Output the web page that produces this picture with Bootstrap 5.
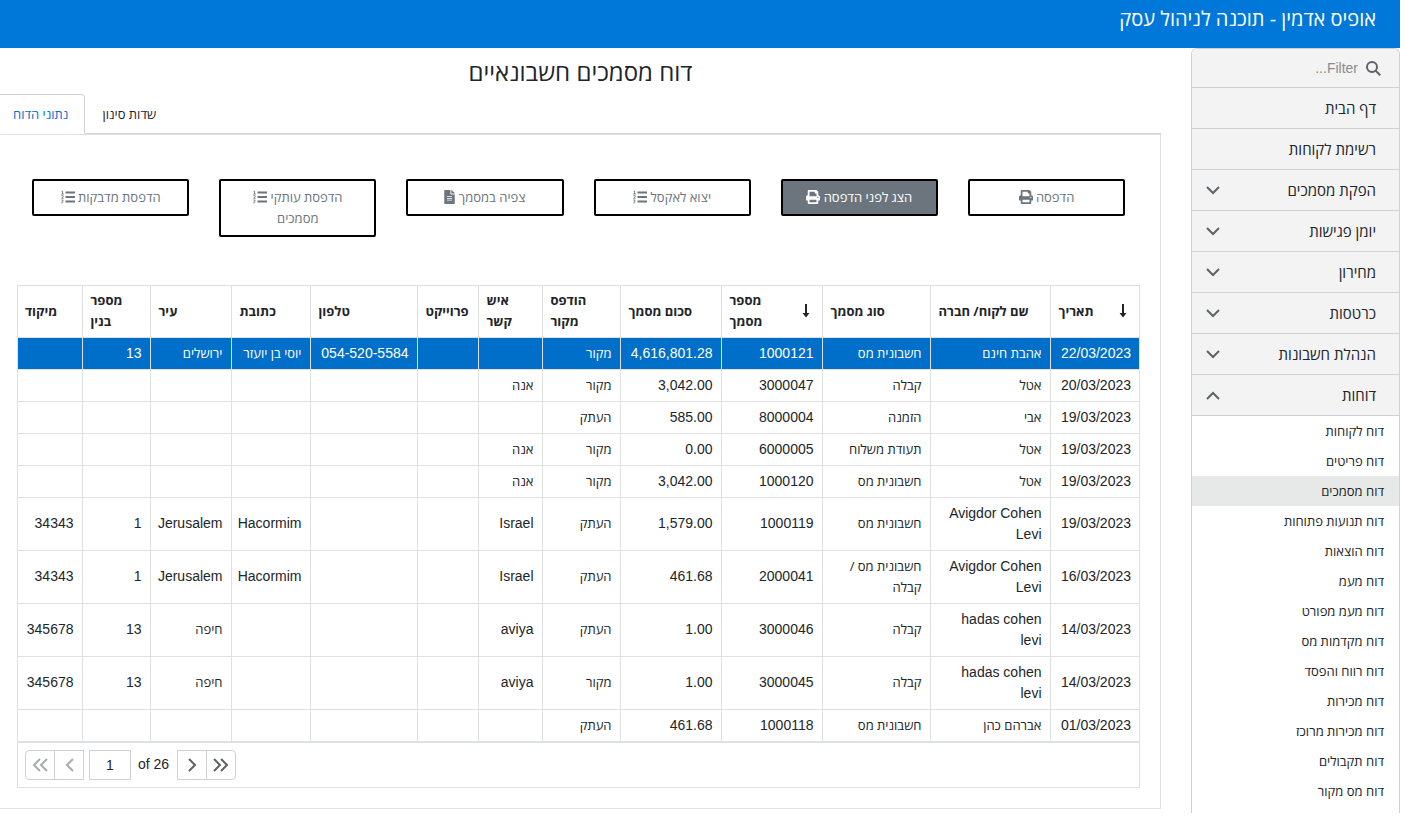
<!DOCTYPE html>
<html lang="he" dir="rtl">
<head>
<meta charset="utf-8">
<meta name="viewport" content="width=device-width, initial-scale=1">
<title>אופיס אדמין - תוכנה לניהול עסק</title>
<link rel="stylesheet" href="https://cdn.jsdelivr.net/npm/bootstrap@5.3.0/dist/css/bootstrap.min.css">
<style>
  :root { --he: "Open Sans", "Liberation Sans", sans-serif; --la: "Liberation Sans", "Open Sans", sans-serif; --line: #dfe0e2; --edge: #ced1da; }
  body { font-family: var(--he); font-size: 14px; color: #212529; padding-right: 6px; background: #fff; }
  .topbar { background: #0078d9; height: 48px; padding: 4px 24px 12px; }
  .topbar a { color: #fff; font-size: 20px; line-height: 30px; text-decoration: none; font-weight: 500; }
  .side { width: 209px; border: 1px solid var(--edge); border-bottom: 0; border-radius: 6px 6px 0 0; padding-bottom: 7px; overflow: hidden; }
  .filterbox { height: 39px; background: #f3f3f3; border-bottom: 1px solid var(--edge); padding: 0 18px; }
  .filterbox input { background: transparent; border: 0; outline: 0; width: 100%; padding: 0; font-family: var(--la); font-size: 14px; }
  .filterbox input::placeholder { color: #8a8c8e; opacity: 1; }
  .menu-head { width: 100%; height: 41px; background: #f3f3f3; border: 0; border-bottom: 1px solid var(--edge); padding: 0 23px 0 14px; font-size: 15px; color: #212529; text-decoration: none; }
  .menu-sub a { height: 30px; line-height: 30px; padding: 0 15px; font-size: 13px; color: #212529; text-decoration: none; }
  .menu-sub a.current { background: #e7e9e8; }
  .main-area { margin-left: 0; margin-right: 30px; min-width: 0; }
  .page-title { font-size: 24px; line-height: 30px; margin: 9px 0 7px; }
  .report-tabs { --bs-nav-tabs-border-color: #d4d4d6; border-bottom-color: #d4d4d6; }
  .report-tabs .nav-link { font-size: 13px; line-height: 20px; color: #212529; padding: 9px 16px; border-radius: 0 4px 0 0; }
  .report-tabs .nav-link.active { color: #0b6fd0; border-left: 0; border-color: var(--edge) var(--edge) #fff; padding-left: 13px; }
  .pane { border: 1px solid var(--line); border-left: 0; padding: 44px 20px 20px 17px; }
  .tool-row { --bs-gutter-x: 30px; margin: 0; }
  .tool { border: 2px solid #000; border-radius: 2px; background: #fff; color: #6c757d; width: 100%; padding: 6px 16px; font-size: 13px; line-height: 21px; }
  .tool.on { background: #6c757d; color: #fff; }
  .tool svg { height: 14px; fill: currentColor; vertical-align: -2px; }
  .grid-box { border: 1px solid var(--line); margin-top: 48px; }
  .grid { width: 100%; table-layout: fixed; line-height: 21px; margin: 0; }
  .grid th, .grid td { padding: 5px 8px; border: 0 solid var(--line); border-bottom-width: 1px; vertical-align: middle; }
  .grid th + th, .grid td + td { border-right-width: 1px; }
  .grid th { font-size: 13px; font-weight: 700; text-align: left; height: 51px; padding: 4px 8px; }
  .grid td { font-family: var(--la); text-align: right; font-size: 14px; }
  .grid td.he { font-size: 13px; font-family: var(--he); }
  .grid tr.picked td { background: #006fc9; color: #fff; }
  .sorted { padding-right: 4px; }
  .w61 { width: 61px; } .w64 { width: 64px; } .w65 { width: 65px; } .w68 { width: 68px; } .w78 { width: 78px; } .w79 { width: 79px; } .w81 { width: 81px; }
  .w89 { width: 89px; } .w101 { width: 101px; } .w107 { width: 107px; } .w108 { width: 108px; } .w120 { width: 120px; }
  .pager { border-top: 1px solid var(--line); padding: 7px; font-family: var(--la); font-size: 14px; height: 45px; }
  .pager button, .pager input { height: 30px; border: 1px solid var(--edge); background: #fff; padding: 0; }
  .pager button { width: 30px; color: #5f6266; display: flex; align-items: center; justify-content: center; }
  .pager button:disabled { color: #a9abad; }
  .pager button + button { margin-left: -1px; }
  .pager input { width: 42px; text-align: center; margin: 0 7px 0 5px; color: #212529; }
  .stroke { fill: none; stroke: currentColor; stroke-width: 2; }
  .muted-ico { color: #5f6266; }
</style>
</head>
<body>
<svg width="0" height="0" class="position-absolute" aria-hidden="true">
  <symbol id="print" viewBox="0 0 512 512"><path d="M448 192V77.25c0-8.49-3.37-16.62-9.37-22.63L393.37 9.37c-6-6-14.14-9.37-22.63-9.37H96C78.33 0 64 14.33 64 32v160c-35.35 0-64 28.65-64 64v112c0 8.84 7.16 16 16 16h48v96c0 17.67 14.33 32 32 32h320c17.67 0 32-14.33 32-32v-96h48c8.84 0 16-7.16 16-16V256c0-35.35-28.65-64-64-64zm-64 256H128v-96h256v96zm0-224H128V64h192v48c0 8.84 7.16 16 16 16h48v96zm48 72c-13.25 0-24-10.75-24-24s10.75-24 24-24 24 10.75 24 24-10.75 24-24 24z"/></symbol>
  <symbol id="doc" viewBox="0 0 384 512"><path d="M224 136V0H24C10.7 0 0 10.7 0 24v464c0 13.3 10.7 24 24 24h336c13.3 0 24-10.7 24-24V160H248c-13.2 0-24-10.8-24-24zm64 236c0 6.6-5.4 12-12 12H108c-6.6 0-12-5.4-12-12v-8c0-6.6 5.4-12 12-12h168c6.6 0 12 5.4 12 12v8zm0-64c0 6.6-5.4 12-12 12H108c-6.6 0-12-5.4-12-12v-8c0-6.6 5.4-12 12-12h168c6.6 0 12 5.4 12 12v8zm0-72v8c0 6.6-5.4 12-12 12H108c-6.6 0-12-5.4-12-12v-8c0-6.6 5.4-12 12-12h168c6.6 0 12 5.4 12 12zm96-114.1v6.1H256V0h6.1c6.4 0 12.5 2.5 17 7l97.9 98c4.5 4.5 7 10.6 7 16.9z"/></symbol>
  <symbol id="list" viewBox="0 0 14 14"><path d="M4.500 1.500H14v2H4.500zM4.500 6H14v2H4.500zM4.500 10.500H14v2H4.500z"/><path d="M.5 1h1v3M0 4h3M.3 5.700h1.900v1.200L.6 8.300h2.100M.3 10h1.900l-.9 1.300c1.600.2 1 1.900-1.100 1.500" fill="none" stroke="currentColor" stroke-width=".8"/></symbol>
  <symbol id="down" viewBox="0 0 14 9"><path class="stroke" d="M1 1l6 6 6-6"/></symbol>
  <symbol id="up" viewBox="0 0 14 9"><path class="stroke" d="M1 8l6-6 6 6"/></symbol>
  <symbol id="sort" viewBox="0 0 8 14"><path fill="#212529" d="M3 0h2v9h2.500L4 13.500.5 9H3z"/></symbol>
</svg>

<header class="topbar"><a href="#">אופיס אדמין - תוכנה לניהול עסק</a></header>

<div class="d-flex align-items-start">
  <nav class="side flex-shrink-0">
    <div class="filterbox d-flex align-items-center gap-2">
      <svg class="muted-ico flex-shrink-0" width="15" height="15" viewBox="0 0 15 15" aria-hidden="true"><circle class="stroke" cx="6" cy="6" r="5"/><path class="stroke" d="M9.600 9.600l4.600 4.600"/></svg>
      <input type="text" placeholder="Filter..." aria-label="Filter">
    </div>
    <a class="menu-head d-flex align-items-center" href="#">דף הבית</a>
    <a class="menu-head d-flex align-items-center" href="#">רשימת לקוחות</a>
    <button class="menu-head d-flex align-items-center justify-content-between" type="button">הפקת מסמכים<svg class="muted-ico" width="14" height="9"><use href="#down"/></svg></button>
    <button class="menu-head d-flex align-items-center justify-content-between" type="button">יומן פגישות<svg class="muted-ico" width="14" height="9"><use href="#down"/></svg></button>
    <button class="menu-head d-flex align-items-center justify-content-between" type="button">מחירון<svg class="muted-ico" width="14" height="9"><use href="#down"/></svg></button>
    <button class="menu-head d-flex align-items-center justify-content-between" type="button">כרטסות<svg class="muted-ico" width="14" height="9"><use href="#down"/></svg></button>
    <button class="menu-head d-flex align-items-center justify-content-between" type="button">הנהלת חשבונות<svg class="muted-ico" width="14" height="9"><use href="#down"/></svg></button>
    <button class="menu-head d-flex align-items-center justify-content-between" type="button" aria-expanded="true">דוחות<svg class="muted-ico" width="14" height="9"><use href="#up"/></svg></button>
    <div class="menu-sub">
      <a class="d-block" href="#">דוח לקוחות</a>
      <a class="d-block" href="#">דוח פריטים</a>
      <a class="d-block current" href="#" aria-current="page">דוח מסמכים</a>
      <a class="d-block" href="#">דוח תנועות פתוחות</a>
      <a class="d-block" href="#">דוח הוצאות</a>
      <a class="d-block" href="#">דוח מעמ</a>
      <a class="d-block" href="#">דוח מעמ מפורט</a>
      <a class="d-block" href="#">דוח מקדמות מס</a>
      <a class="d-block" href="#">דוח רווח והפסד</a>
      <a class="d-block" href="#">דוח מכירות</a>
      <a class="d-block" href="#">דוח מכירות מרוכז</a>
      <a class="d-block" href="#">דוח תקבולים</a>
      <a class="d-block" href="#">דוח מס מקור</a>
    </div>
  </nav>

  <main class="main-area flex-grow-1">
    <h1 class="page-title text-center fw-normal">דוח מסמכים חשבונאיים</h1>
    <ul class="nav nav-tabs report-tabs p-0" dir="ltr">
      <li class="nav-item"><a class="nav-link active" href="#" dir="rtl">נתוני הדוח</a></li>
      <li class="nav-item"><a class="nav-link" href="#" dir="rtl">שדות סינון</a></li>
    </ul>
    <section class="pane">
      <div class="row tool-row row-cols-6">
        <div class="col"><button class="tool" type="button">הדפסה <svg width="14"><use href="#print"/></svg></button></div>
        <div class="col"><button class="tool on" type="button">הצג לפני הדפסה <svg width="14"><use href="#print"/></svg></button></div>
        <div class="col"><button class="tool" type="button">יצוא לאקסל <svg width="14"><use href="#list"/></svg></button></div>
        <div class="col"><button class="tool" type="button">צפיה במסמך <svg width="11"><use href="#doc"/></svg></button></div>
        <div class="col"><button class="tool" type="button">הדפסת עותקי <svg width="14"><use href="#list"/></svg> מסמכים</button></div>
        <div class="col"><button class="tool" type="button">הדפסת מדבקות <svg width="14"><use href="#list"/></svg></button></div>
      </div>

      <div class="grid-box">
        <div class="table-responsive">
        <table class="grid">
          <thead>
            <tr>
              <th class="w89"><span class="sorted d-flex justify-content-between align-items-center"><svg class="flex-shrink-0" width="8" height="14"><use href="#sort"/></svg>תאריך</span></th>
              <th class="w120">שם לקוח/ חברה</th>
              <th class="w108">סוג מסמך</th>
              <th class="w101"><span class="sorted d-flex justify-content-between align-items-center"><svg class="flex-shrink-0" width="8" height="14"><use href="#sort"/></svg><span>מספר<br>מסמך</span></span></th>
              <th class="w101">סכום מסמך</th>
              <th class="w78">הודפס<br>מקור</th>
              <th class="w64">איש<br>קשר</th>
              <th class="w61">פרוייקט</th>
              <th class="w107">טלפון</th>
              <th class="w79">כתובת</th>
              <th class="w81">עיר</th>
              <th class="w68">מספר<br>בנין</th>
              <th class="w65">מיקוד</th>
            </tr>
          </thead>
          <tbody>
            <tr class="picked"><td>22/03/2023</td><td class="he">אהבת חינם</td><td class="he">חשבונית מס</td><td>1000121</td><td>4,616,801.28</td><td class="he">מקור</td><td></td><td></td><td dir="ltr">054-520-5584</td><td class="he text-nowrap">יוסי בן יועזר</td><td class="he">ירושלים</td><td>13</td><td></td></tr>
            <tr><td>20/03/2023</td><td class="he">אטל</td><td class="he">קבלה</td><td>3000047</td><td>3,042.00</td><td class="he">מקור</td><td class="he">אנה</td><td></td><td></td><td></td><td></td><td></td><td></td></tr>
            <tr><td>19/03/2023</td><td class="he">אבי</td><td class="he">הזמנה</td><td>8000004</td><td>585.00</td><td class="he">העתק</td><td></td><td></td><td></td><td></td><td></td><td></td><td></td></tr>
            <tr><td>19/03/2023</td><td class="he">אטל</td><td class="he">תעודת משלוח</td><td>6000005</td><td>0.00</td><td class="he">מקור</td><td class="he">אנה</td><td></td><td></td><td></td><td></td><td></td><td></td></tr>
            <tr><td>19/03/2023</td><td class="he">אטל</td><td class="he">חשבונית מס</td><td>1000120</td><td>3,042.00</td><td class="he">מקור</td><td class="he">אנה</td><td></td><td></td><td></td><td></td><td></td><td></td></tr>
            <tr><td>19/03/2023</td><td>Avigdor Cohen Levi</td><td class="he">חשבונית מס</td><td>1000119</td><td>1,579.00</td><td class="he">העתק</td><td>Israel</td><td></td><td></td><td>Hacormim</td><td>Jerusalem</td><td>1</td><td>34343</td></tr>
            <tr><td>16/03/2023</td><td>Avigdor Cohen Levi</td><td class="he">חשבונית מס / קבלה</td><td>2000041</td><td>461.68</td><td class="he">העתק</td><td>Israel</td><td></td><td></td><td>Hacormim</td><td>Jerusalem</td><td>1</td><td>34343</td></tr>
            <tr><td>14/03/2023</td><td>hadas cohen levi</td><td class="he">קבלה</td><td>3000046</td><td>1.00</td><td class="he">העתק</td><td>aviya</td><td></td><td></td><td></td><td class="he">חיפה</td><td>13</td><td>345678</td></tr>
            <tr><td>14/03/2023</td><td>hadas cohen levi</td><td class="he">קבלה</td><td>3000045</td><td>1.00</td><td class="he">מקור</td><td>aviya</td><td></td><td></td><td></td><td class="he">חיפה</td><td>13</td><td>345678</td></tr>
            <tr><td>01/03/2023</td><td class="he">אברהם כהן</td><td class="he">חשבונית מס</td><td>1000118</td><td>461.68</td><td class="he">העתק</td><td></td><td></td><td></td><td></td><td></td><td></td><td></td></tr>
          </tbody>
        </table>
        </div>
        <div class="pager d-flex align-items-center" dir="ltr">
          <button class="rounded-start-1" type="button" disabled aria-label="First page"><svg class="stroke" width="16" height="14" viewBox="0 0 16 14"><path d="M8 1L2 7l6 6M15 1L9 7l6 6"/></svg></button>
          <button type="button" disabled aria-label="Previous page"><svg class="stroke" width="9" height="14" viewBox="0 0 9 14"><path d="M8 1L2 7l6 6"/></svg></button>
          <input type="text" value="1" aria-label="Page">
          <span class="me-2">of 26</span>
          <button type="button" aria-label="Next page"><svg class="stroke" width="9" height="14" viewBox="0 0 9 14"><path d="M1 1l6 6-6 6"/></svg></button>
          <button class="rounded-end-1" type="button" aria-label="Last page"><svg class="stroke" width="16" height="14" viewBox="0 0 16 14"><path d="M1 1l6 6-6 6M8 1l6 6-6 6"/></svg></button>
        </div>
      </div>
    </section>
  </main>
</div>
<script src="https://cdn.jsdelivr.net/npm/bootstrap@5.3.0/dist/js/bootstrap.bundle.min.js"></script>
</body>
</html>
